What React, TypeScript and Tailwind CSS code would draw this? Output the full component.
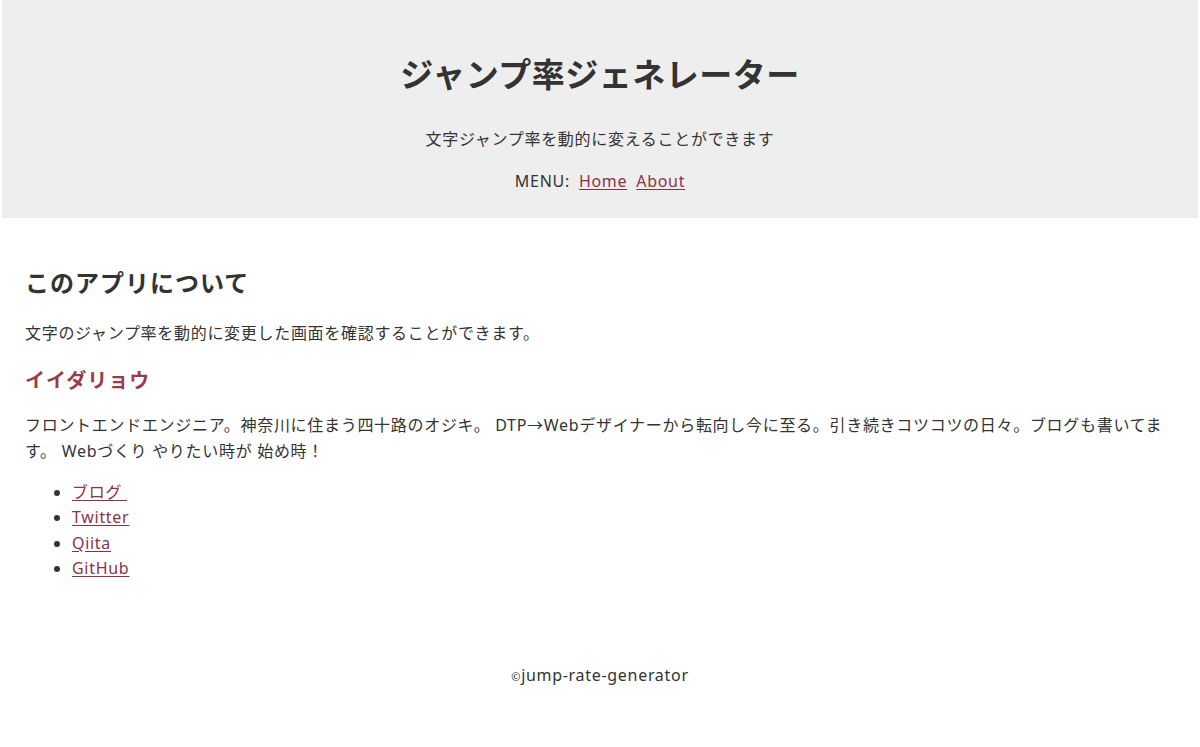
export default function App() {
  const links = ["ブログ\u00a0", "Twitter", "Qiita", "GitHub"];

  return (
    <div
      className="min-h-[747px] bg-white text-[#333333] tracking-[0.7px]"
      style={{ fontFamily: '"Noto Sans", "Noto Sans CJK JP", sans-serif' }}
    >
      <header className="mx-[2px] bg-[#eeeeee] pt-[48px] pb-[24px] text-center">
        <h1 className="text-[33px] font-bold leading-[54px] tracking-[0.5px]">
          ジャンプ率ジェネレーター
        </h1>
        <p className="mt-[24px] text-[16px] leading-[26px]">
          文字ジャンプ率を動的に変えることができます
        </p>
        <nav className="mt-[16px] flex justify-center gap-[9px] text-[16px] leading-[26px]">
          <span>MENU:</span>
          <a href="#" className="text-[#8a3345] underline underline-offset-2">
            Home
          </a>
          <a href="#" className="text-[#8a3345] underline underline-offset-2">
            About
          </a>
        </nav>
      </header>

      <main className="px-[25px]">
        <h2 className="mt-[47px] text-[24px] font-bold leading-[36px] tracking-[1px]">
          このアプリについて
        </h2>
        <p className="mt-[19px] text-[16px] leading-[26px]">
          文字のジャンプ率を動的に変更した画面を確認することができます。
        </p>
        <h3 className="mt-[20px] text-[20px] font-bold leading-[30px] tracking-[1px] text-[#9a3a4a]">
          イイダリョウ
        </h3>
        <p className="mt-[16px] text-[16px] leading-[26px]">
          フロントエンドエンジニア。神奈川に住まう四十路のオジキ。 DTP→Webデザイナーから転向し今に至る。引き続きコツコツの日々。ブログも書いてます。 Webづくり やりたい時が 始め時！
        </p>
        <ul className="mt-[16px] list-disc pl-[47px] text-[16px] leading-[25.3px]">
          {links.map((l) => (
            <li key={l}>
              <a href="#" className="text-[#8a3345] underline underline-offset-2">
                {l}
              </a>
            </li>
          ))}
        </ul>
      </main>

      <footer className="mt-[81px] text-center text-[16px] leading-[26px]">
        <span className="text-[11px]">©</span>jump-rate-generator
      </footer>
    </div>
  );
}
